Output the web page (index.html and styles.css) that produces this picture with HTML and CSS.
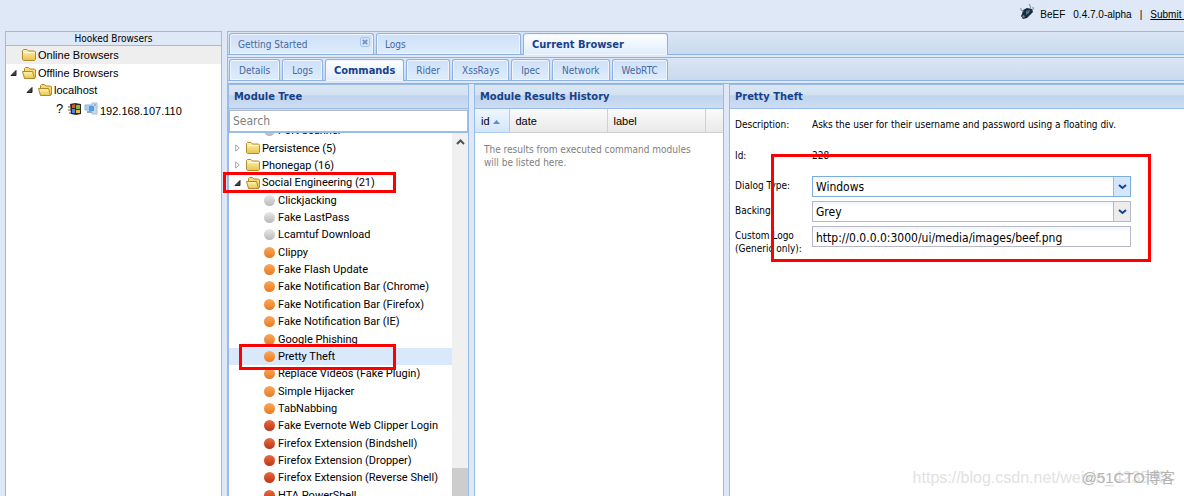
FILE: index.html
```html
<!DOCTYPE html>
<html lang="en">
<head>
<meta charset="utf-8">
<title>BeEF Control Panel</title>
<link rel="stylesheet" href="styles.css">
</head>
<body>
<svg class="defs" aria-hidden="true">
  <defs>
    <linearGradient id="gold" x1="0" y1="0" x2="0" y2="1"><stop offset="0" stop-color="#fff6b0"/><stop offset="1" stop-color="#e8c34e"/></linearGradient>
    <symbol id="folder" viewBox="0 0 14 12">
      <path d="M.5 10.500V1.500L1.500 .5H5L6.500 2H12.500L13.500 3V10.500L12.500 11.500H1.500Z" fill="url(#gold)" stroke="#b08a2c"/>
      <path d="M1.500 3.500H12.500" stroke="#fffbd8"/>
    </symbol>
    <symbol id="open" viewBox="0 0 14 12">
      <path d="M2.500 10.500V1.500L3.500 .5H6.500L8 2H12.500L13.500 3V10.500L12.500 11.500H3Z" fill="#f4d874" stroke="#b08a2c"/>
      <path d="M.5 4.500H10.500L12.500 11.500H2.500Z" fill="url(#gold)" stroke="#b08a2c"/>
    </symbol>
    <symbol id="expanded" viewBox="0 0 7 7"><path d="M6 1V6H1Z" fill="#444" stroke="#222"/></symbol>
    <symbol id="collapsed" viewBox="0 0 7 9"><path d="M1.500 1L5.500 4.500L1.500 8Z" fill="#fff" stroke="#999"/></symbol>
    <symbol id="chevron" viewBox="0 0 9 6"><path d="M1 1L4.500 4L8 1" fill="none" stroke="#15428b" stroke-width="2"/></symbol>
  </defs>
</svg>
<div class="app">
  <header class="top">
    <svg class="bull" viewBox="0 0 14 17" aria-hidden="true">
      <path d="M3 7L7 5L12 6L13 9L10 12L7 15L3 16L1 13L2 11Z" fill="#1d2a38"/>
      <path d="M9 6Q12 5 9 1M13 4Q14 6 12 8M4 8Q0 8 1 5" fill="none" stroke="#76828e"/>
      <path d="M6 8L10 7L9 10L6 12Z" fill="#43789e"/><path d="M2 13L4 12L5 14L3 15Z" fill="#66839b"/>
    </svg>
    <span>BeEF</span><span class="version">0.4.7.0-alpha</span><span>|</span><a href="#">Submit Bug</a>
  </header>
  <div class="body">
    <aside class="hooked">
      <h2>Hooked Browsers</h2>
      <ul>
        <li class="shade root"><svg class="folder"><use href="#folder"/></svg>Online Browsers</li>
        <li><svg class="arrow"><use href="#expanded"/></svg><svg class="folder"><use href="#open"/></svg>Offline Browsers</li>
        <li class="child"><svg class="arrow"><use href="#expanded"/></svg><svg class="folder"><use href="#open"/></svg>localhost</li>
        <li class="host"><span class="unknown">?</span>
          <svg class="os" viewBox="0 0 14 14"><path d="M2 2L7 1L13 2V12L8 13L3 12Z" fill="#29292b"/><path d="M4 3L7 2V6H4Z" fill="#e5532b"/><path d="M8 3L12 3V7H8Z" fill="#84b83e"/><path d="M4 7H7V11L4 11Z" fill="#4a8dda"/><path d="M8 8H12V11H8Z" fill="#f4ba36"/><path d="M0 5H3M0 8H3M1 11H3" stroke="#7b4a38"/></svg>
          <svg class="os" viewBox="0 0 14 14"><path d="M1 3H8V8H1Z" fill="#a3d3f7" stroke="#91b4d0"/><path d="M3 10H9" stroke="#8da9bd" stroke-width="2"/><path d="M8 1H13V12H8Z" fill="#c6d8e7" stroke="#a9c0d3"/><path d="M5 4H10V9H5Z" fill="#4ea0e5"/><path d="M10 3H12" stroke="#7990a4"/></svg>
          <span class="ip">192.168.107.110</span></li>
      </ul>
    </aside>
    <main class="center">
      <nav class="tabs main-tabs">
        <button class="wide">Getting Started<span class="close"><svg viewBox="0 0 9 9"><path d="M2 2L7 7M7 2L2 7" stroke="#6f96c8" stroke-width="2"/></svg></span></button>
        <button class="wide">Logs</button>
        <button class="wide active">Current Browser</button>
      </nav>
      <nav class="tabs sub-tabs">
        <button>Details</button><button>Logs</button><button class="active">Commands</button><button>Rider</button><button>XssRays</button><button>Ipec</button><button>Network</button><button>WebRTC</button>
      </nav>
      <div class="panels">
        <section class="panel modules">
          <h3>Module Tree</h3>
          <div class="search"><input type="text" placeholder="Search" aria-label="Search modules"></div>
          <div class="scroller">
            <ul class="tree">
              <li class="leaf"><i class="dot grey"></i>Port Scanner</li>
              <li><svg class="arrow"><use href="#collapsed"/></svg><svg class="folder"><use href="#folder"/></svg>Persistence (5)</li>
              <li><svg class="arrow"><use href="#collapsed"/></svg><svg class="folder"><use href="#folder"/></svg>Phonegap (16)</li>
              <li><svg class="arrow"><use href="#expanded"/></svg><svg class="folder"><use href="#open"/></svg>Social Engineering (21)</li>
              <li class="leaf"><i class="dot grey"></i>Clickjacking</li>
              <li class="leaf"><i class="dot grey"></i>Fake LastPass</li>
              <li class="leaf"><i class="dot grey"></i>Lcamtuf Download</li>
              <li class="leaf"><i class="dot orange"></i>Clippy</li>
              <li class="leaf"><i class="dot orange"></i>Fake Flash Update</li>
              <li class="leaf"><i class="dot orange"></i>Fake Notification Bar (Chrome)</li>
              <li class="leaf"><i class="dot orange"></i>Fake Notification Bar (Firefox)</li>
              <li class="leaf"><i class="dot orange"></i>Fake Notification Bar (IE)</li>
              <li class="leaf"><i class="dot orange"></i>Google Phishing</li>
              <li class="leaf selected"><i class="dot orange"></i>Pretty Theft</li>
              <li class="leaf"><i class="dot orange"></i>Replace Videos (Fake Plugin)</li>
              <li class="leaf"><i class="dot orange"></i>Simple Hijacker</li>
              <li class="leaf"><i class="dot orange"></i>TabNabbing</li>
              <li class="leaf"><i class="dot red"></i>Fake Evernote Web Clipper Login</li>
              <li class="leaf"><i class="dot red"></i>Firefox Extension (Bindshell)</li>
              <li class="leaf"><i class="dot red"></i>Firefox Extension (Dropper)</li>
              <li class="leaf"><i class="dot red"></i>Firefox Extension (Reverse Shell)</li>
              <li class="leaf"><i class="dot red"></i>HTA PowerShell</li>
            </ul>
            <div class="bar"><svg viewBox="0 0 9 6"><path d="M1 5L4.500 1.500L8 5" fill="none" stroke="#505050" stroke-width="2"/></svg><div class="thumb"></div></div>
          </div>
        </section>
        <section class="panel history">
          <h3>Module Results History</h3>
          <table>
            <thead><tr><th class="id">id <svg viewBox="0 0 7 4"><path d="M0 4L3.500 0L7 4Z" fill="#5b8fc8"/></svg></th><th class="col">date</th><th class="col">label</th><th></th></tr></thead>
          </table>
          <p>The results from executed command modules will be listed here.</p>
        </section>
        <section class="panel details">
          <h3>Pretty Theft</h3>
          <form>
            <span class="label">Description:</span><span class="desc">Asks the user for their username and password using a floating div.</span>
            <span class="label short">Id:</span><span class="value">228</span>
            <label for="dialog">Dialog Type:</label>
            <div class="combo focus"><select id="dialog"><option>Windows</option></select><span class="trigger"><svg><use href="#chevron"/></svg></span></div>
            <label for="backing">Backing:</label>
            <div class="combo"><select id="backing"><option>Grey</option></select><span class="trigger"><svg><use href="#chevron"/></svg></span></div>
            <label for="logo">Custom Logo (Generic only):</label>
            <input id="logo" class="field" type="text" value="http://0.0.0.0:3000/ui/media/images/beef.png">
          </form>
        </section>
      </div>
    </main>
  </div>
  <div class="mark mark-group"></div>
  <div class="mark mark-module"></div>
  <div class="mark mark-form"></div>
  <div class="watermark csdn">https://blog.csdn.net/weixin_423500</div>
  <div class="watermark cto">@51CTO博客</div>
</div>
</body>
</html>
```
FILE: styles.css
```css
* { box-sizing: border-box; }
body { margin: 0; font: 11px "Liberation Sans", Arial, sans-serif; color: #000; background: #dfe8f6; }
ul { list-style: none; margin: 0; padding: 0; }
button, input, select { font: inherit; color: inherit; margin: 0; }
svg { flex: none; }
.defs { position: absolute; width: 0; height: 0; }
.app { position: relative; display: flex; flex-direction: column; height: 100vh; overflow: hidden; }

.top { flex: none; height: 31px; display: flex; justify-content: flex-end; align-items: center; gap: 8px; padding-bottom: 2px; white-space: nowrap; font-size: 10px; margin-right: -18px; }
.top a { color: #000; }
.top .bull { width: 14px; height: 17px; margin-bottom: 6px; margin-right: -2px; }

.body { flex: 1; min-height: 0; display: flex; gap: 5px; padding-left: 5px; }
.hooked { flex: none; width: 217px; background: #fff; border: 1px solid #99bbe8; border-bottom: 0; }
.hooked h2 { margin: 0; height: 14px; font: 10px/13px "DejaVu Sans Condensed", Tahoma, sans-serif; text-align: center; background: #dfe8f6; border-bottom: 1px solid #99bbe8; }
.hooked li { display: flex; align-items: center; height: 17px; padding-left: 4px; }
.hooked .root { height: 18px; padding-left: 16px; }
.hooked .shade { background: #eee; }
.hooked .child { padding-left: 20px; height: 18px; }
.hooked .host { padding-left: 50px; height: 19px; gap: 2px; }
.unknown { width: 10px; font-size: 13px; }
.os { width: 14px; height: 14px; }
.ip { padding-top: 4px; }
.arrow { width: 7px; height: 8px; margin-right: 5px; }
.folder { width: 14px; height: 12px; margin-right: 2px; }

.center { flex: 1; min-width: 0; display: flex; flex-direction: column; border: 1px solid #99bbe8; border-right: 0; border-bottom: 0; }
.tabs { flex: none; display: flex; align-items: flex-end; gap: 2px; padding-left: 1px; background: linear-gradient(#dbe6f4, #c9d9ee); border-bottom: 1px solid #8db2e3; }
.main-tabs { height: 23px; }
.sub-tabs { height: 24px; border-top: 1px solid #8db2e3; margin-top: 2px; }
.tabs button { position: relative; height: 21px; padding: 0 8px; border: 1px solid #8db2e3; border-bottom: 0; border-radius: 3px 3px 0 0; box-shadow: inset 0 0 0 1px #eef5ff; background: linear-gradient(#cfe0f7, #deecfd); color: #416aa3; font-family: "DejaVu Sans Condensed", Tahoma, sans-serif; font-size: 10px; text-align: left; }
.sub-tabs button { padding: 0 9px; }
.tabs .wide { width: 145px; }
.tabs .active { height: 22px; margin-bottom: -1px; font-size: 11px; font-weight: bold; color: #15428b; background: linear-gradient(#fff, #deecfd); }
.sub-tabs .active { padding: 0 8px; }
.close { position: absolute; right: 3px; top: 3px; width: 10px; height: 10px; border: 1px solid #a9c6ea; border-radius: 2px; display: flex; }

.panels { flex: 1; min-height: 0; display: flex; gap: 5px; margin-top: 2px; border-top: 1px solid #8db2e3; }
.panel { display: flex; flex-direction: column; background: #fff; border: 1px solid #99bbe8; border-bottom: 0; min-height: 0; }
.panel h3 { flex: none; margin: 0; height: 24px; padding-left: 5px; font: bold 11px/24px "DejaVu Sans Condensed", Tahoma, sans-serif; color: #15428b; background: linear-gradient(#dae6f4 0, #d3e1f1 45%, #bfd3ed 46%, #cddef3); border-bottom: 1px solid #99bbe8; }
.modules { flex: none; width: 241px; }
.history { flex: none; width: 250px; }
.details { flex: 1; border-right: 0; }
.search { flex: none; padding: 1px 0 0; background: #d0def0; border-bottom: 1px solid #99bbe8; }
.search input { display: block; width: 100%; height: 22px; padding: 0 3px; border: 1px solid #b5b8c8; font-family: "DejaVu Sans Condensed", Tahoma, sans-serif; font-size: 12px; background: #fff; }
.search input::placeholder { color: #808080; opacity: 1; }
.scroller { flex: 1; min-height: 0; display: flex; overflow: hidden; }
.tree { flex: 1; min-width: 0; height: 382px; margin-top: -11px; display: grid; grid-auto-rows: 1fr; font-family: Roboto, "Liberation Sans", sans-serif; }
.tree li { display: flex; align-items: center; padding-left: 5px; white-space: nowrap; }
.tree .leaf { padding-left: 35px; }
.tree .selected { background: #d9e8fb; }
.dot { width: 11px; height: 11px; margin-right: 3px; border-radius: 50%; }
.grey { background: linear-gradient(#e8e8e8, #b9b9b9); }
.orange { background: linear-gradient(#fba95c, #e87a22); }
.red { background: linear-gradient(#ea6a40, #bd3516); }
.bar { flex: none; width: 16px; background: #f0f0f0; display: flex; flex-direction: column; justify-content: space-between; align-items: center; padding-top: 6px; }
.bar svg { width: 9px; height: 6px; }
.thumb { width: 100%; height: 28px; background: #cdcdcd; }

.history table { width: 100%; table-layout: fixed; border-collapse: collapse; }
.history th { height: 23px; padding: 1px 6px 0; font-weight: normal; text-align: left; background: linear-gradient(#fafafa, #e9e9e9); border-right: 1px solid #d0d0d0; border-bottom: 1px solid #d0d0d0; }
.history th:last-child { border-right: 0; }
.history .id { width: 34px; white-space: nowrap; background: linear-gradient(#eef6ff, #d5e6fa); border-color: #aaccf6; }
.history .col { width: 98px; }
.history th svg { width: 7px; height: 4px; margin-bottom: 1px; }
.history p { margin: 0; padding: 10px 30px 10px 9px; font: 10px/13px "DejaVu Sans Condensed", Tahoma, sans-serif; color: #808080; }

form { display: grid; grid-template-columns: 77px minmax(0, 319px); row-gap: 4px; padding: 9px 5px; font: 10px/13px "DejaVu Sans Condensed", Tahoma, sans-serif; }
form .label { height: 27px; }
form .short { height: 23px; }
.desc { white-space: nowrap; }
form label { padding-top: 3px; }
.combo { display: flex; height: 21px; border: 1px solid #b5b8c8; background: linear-gradient(#f2f5f7, #fff 6px); }
.combo select { flex: 1; min-width: 0; appearance: none; border: 0; padding: 2px 3px 0; background: transparent; font-size: 12px; outline: 0; }
.trigger { width: 17px; display: flex; align-items: center; justify-content: center; background: #ececec; border-left: 1px solid #b5b8c8; pointer-events: none; }
.trigger svg { width: 9px; height: 6px; }
.focus { border-color: #7eadd9; }
.focus .trigger { background: #d3e6fc; border-color: #99bbe8; }
.field { height: 21px; padding: 2px 3px 0; border: 1px solid #b5b8c8; background: linear-gradient(#f2f5f7, #fff 6px); font-size: 12px; }

.mark { position: absolute; border: 3px solid #f00; pointer-events: none; }
.mark-group { left: 223px; top: 172px; width: 173px; height: 21px; }
.mark-module { left: 239px; top: 344px; width: 157px; height: 26px; }
.mark-form { left: 771px; top: 154px; width: 380px; height: 108px; }
.watermark { position: absolute; white-space: nowrap; pointer-events: none; line-height: 20px; }
.csdn { right: 17px; bottom: 8px; font-size: 16px; color: #e2e2e2; }
.cto { right: 9px; bottom: 8px; font-family: "Liberation Sans", "Noto Sans CJK SC", sans-serif; font-size: 15px; color: #b4b4b4; }
```
